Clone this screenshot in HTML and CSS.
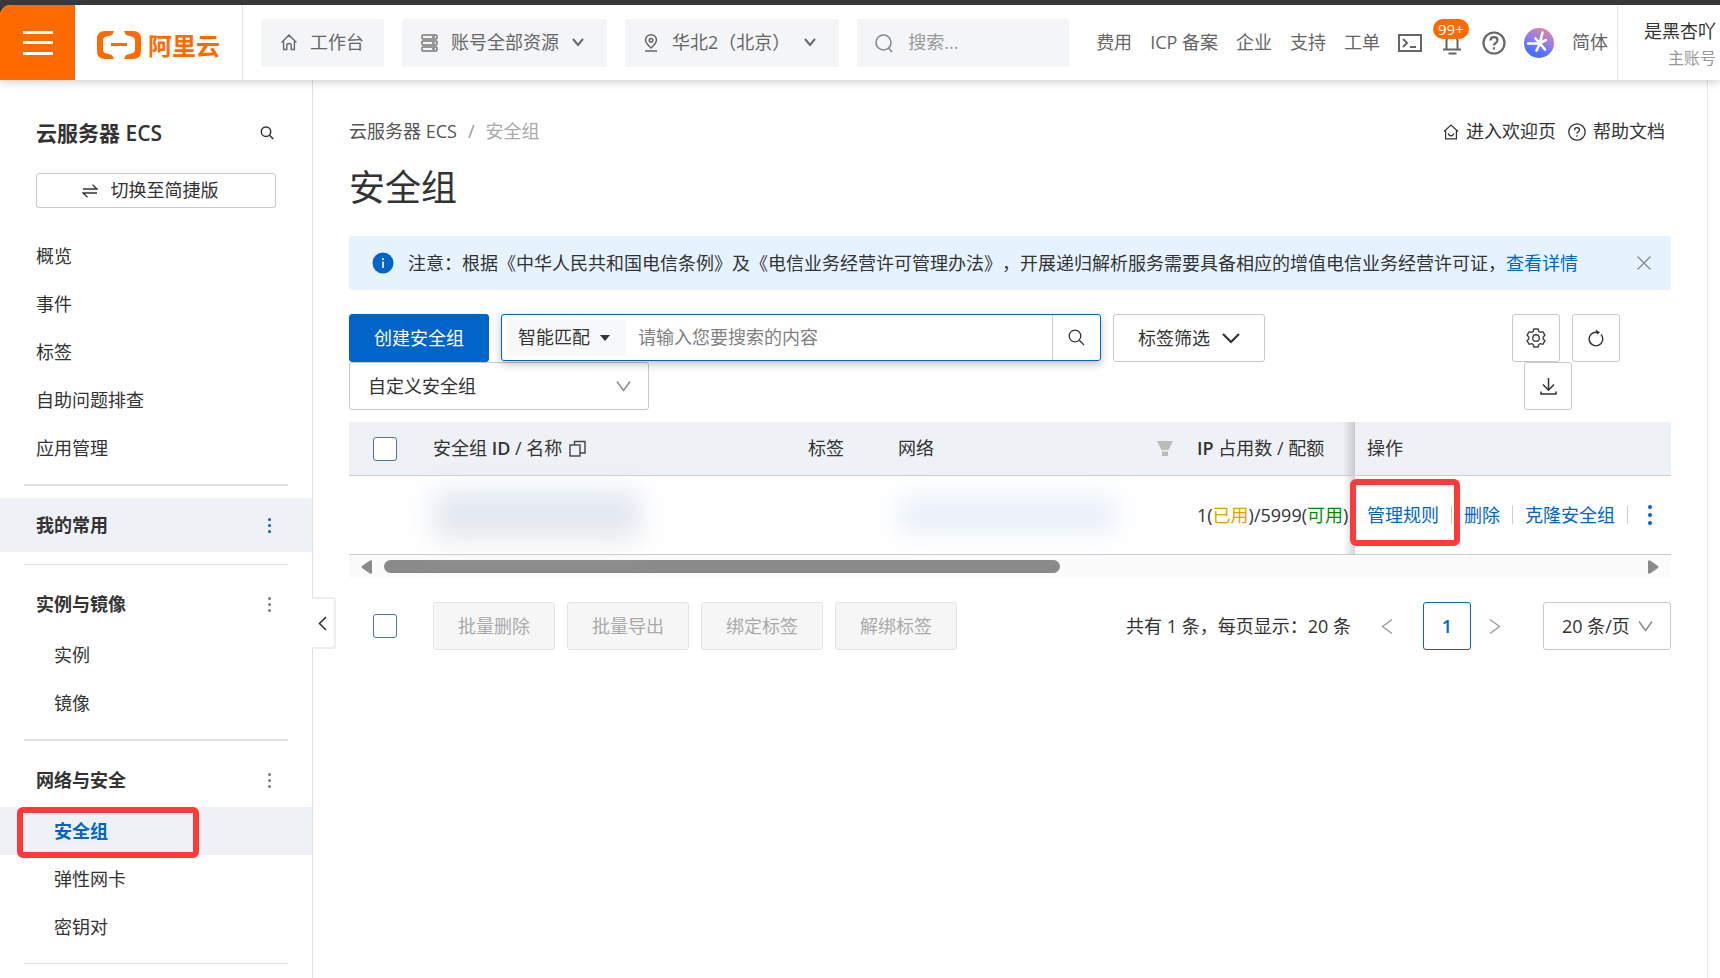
FILE: index.html
```html
<!DOCTYPE html>
<html lang="zh-CN">
<head>
	<meta charset="utf-8">
	<title>安全组 - 云服务器 ECS</title>
	<link rel="stylesheet" href="styles.css">
</head>
<body>
	<header class="topbar">
		<button class="menu-btn" aria-label="菜单">
			<svg width="30" height="26" viewBox="0 0 30 26" fill="#fff"><path d="M0 1h30v3H0zM0 11h30v3H0zM0 22h30v3H0z"/></svg>
		</button>
		<a class="logo" href="#">
			<svg width="44" height="28" viewBox="0 0 44 28" fill="#ff6a00"><path d="M17 0H8Q0 0 0 8v12q0 8 8 8h9l-2-4-7-2q-2-1-2-3V9q0-2 2-3l7-2zM27 0h9q8 0 8 8v12q0 8-8 8h-9l2-4 7-2q2-1 2-3V9q0-2-2-3l-7-2zM14 12h16v3H14z"/></svg>
			<span>阿里云</span>
		</a>
		<div class="topnav">
			<button class="top-btn">
				<svg width="16" height="17" viewBox="0 0 16 17" fill="none" stroke="#666" stroke-width="1.4"><path d="M.6 8.6 8 1l7.4 7.6M2.6 7.5v8h3.2v-4q0-2 2.2-2t2.2 2v4h3.2v-8"/></svg>
				<span>工作台</span>
			</button>
			<button class="top-btn picker">
				<svg width="17" height="18" viewBox="0 0 17 18" fill="none" stroke="#777" stroke-width="1.5"><rect x="1" y="1" width="15" height="4" rx="1"/><rect x="1" y="7" width="15" height="4" rx="1"/><rect x="1" y="13" width="15" height="4" rx="1"/><path d="M11 3h3M11 9h3M11 15h3"/></svg>
				<span>账号全部资源</span>
				<svg width="12" height="9" viewBox="0 0 12 9" fill="none" stroke="#666" stroke-width="2"><path d="m1 1 5 6 5-6"/></svg>
			</button>
			<button class="top-btn picker region">
				<svg width="14" height="18" viewBox="0 0 14 18" fill="none" stroke="#666" stroke-width="1.5"><path d="M7 14Q1.500 9 1.500 6a5.500 5.200 0 0 1 11 0Q12.500 9 7 14zM1 17h12"/><circle cx="7" cy="6.300" r="1.800"/></svg>
				<span>华北2（北京）</span>
				<svg width="12" height="9" viewBox="0 0 12 9" fill="none" stroke="#666" stroke-width="2"><path d="m1 1 5 6 5-6"/></svg>
			</button>
			<label class="top-search">
				<svg width="18" height="20" viewBox="0 0 18 20" fill="none" stroke="#888" stroke-width="1.600"><circle cx="8.500" cy="9.500" r="7.500"/><path d="m13.500 15 3.500 4"/></svg>
				<input type="text" placeholder="搜索..." aria-label="搜索">
			</label>
		</div>
		<nav class="toplinks">
			<a href="#">费用</a>
			<a href="#">ICP 备案</a>
			<a href="#">企业</a>
			<a href="#">支持</a>
			<a href="#">工单</a>
			<a href="#" aria-label="终端">
				<svg width="24" height="18" viewBox="0 0 24 18" fill="none" stroke="#666" stroke-width="2"><rect x="1" y="1" width="22" height="16"/><path d="m5 5 4 4-4 4M12 13h6"/></svg>
			</a>
			<a class="bell" href="#" aria-label="消息">
				<svg width="24" height="24" viewBox="0 0 24 24" fill="none" stroke="#666" stroke-width="2"><path d="M3 18.500h18M6.500 18.500V10a5.500 6 0 0 1 11 0v8.500M8.500 22.500h8"/></svg>
				<span class="badge">99+</span>
			</a>
			<a href="#" aria-label="帮助">
				<svg width="24" height="24" viewBox="0 0 24 24" fill="none" stroke="#666" stroke-width="2.200"><circle cx="12" cy="12" r="10.500"/><path d="M8.500 9.500q0-3.300 3.500-3.300t3.500 3q0 1.800-1.800 2.800T12 14.500M12 16.200v2.200"/></svg>
			</a>
			<a href="#" aria-label="AI 助理">
				<svg width="30" height="30" viewBox="0 0 30 30">
					<defs><linearGradient id="ai" x1="0.300" y1="1" x2="0.700" y2="0"><stop offset="0" stop-color="#2f6bff"/><stop offset="0.500" stop-color="#8a7cf0"/><stop offset="1" stop-color="#d98a9e"/></linearGradient></defs>
					<circle cx="15" cy="15" r="15" fill="url(#ai)"/>
					<path d="M18.500 4.500 16 15M4 15.500h12M16 15.500l-3.500 7M16 15.500l5 6M16 15l6-3M11.500 10.500l4.500 5" fill="none" stroke="#fff" stroke-width="2.600" stroke-linecap="round"/>
				</svg>
			</a>
			<a href="#">简体</a>
		</nav>
		<div class="user">
			<div>是黑杏吖</div>
			<div class="role">主账号</div>
		</div>
	</header>

	<div class="page">
		<aside class="sidebar">
			<div class="side-head">
				<h2>云服务器 <span>ECS</span></h2>
				<button class="plain" aria-label="搜索">
					<svg width="14" height="14" viewBox="0 0 14 14" fill="none" stroke="#333" stroke-width="1.500"><circle cx="6" cy="5.700" r="4.700"/><path d="m9.300 9 4 4"/></svg>
				</button>
			</div>
			<button class="switch-btn">
				<svg width="16" height="14" viewBox="0 0 16 14" fill="none" stroke="#333" stroke-width="1.300"><path d="M1 5h14L10.500.8M15 9H1l4.500 4.200"/></svg>
				<span>切换至简捷版</span>
			</button>
			<nav class="side-nav">
				<a href="#">概览</a>
				<a href="#">事件</a>
				<a href="#">标签</a>
				<a href="#">自助问题排查</a>
				<a href="#">应用管理</a>
				<hr class="thick">
				<div class="group active">我的常用<button class="plain dots" aria-label="更多"><i></i><i></i><i></i></button></div>
				<hr>
				<div class="group">实例与镜像<button class="plain dots" aria-label="更多"><i></i><i></i><i></i></button></div>
				<a class="sub" href="#">实例</a>
				<a class="sub" href="#">镜像</a>
				<hr class="thick">
				<div class="group">网络与安全<button class="plain dots" aria-label="更多"><i></i><i></i><i></i></button></div>
				<a class="sub selected" href="#">安全组<span class="mark"></span></a>
				<a class="sub" href="#">弹性网卡</a>
				<a class="sub" href="#">密钥对</a>
				<hr>
			</nav>
			<button class="collapse" aria-label="收起">
				<svg width="9" height="15" viewBox="0 0 9 15" fill="none" stroke="#333" stroke-width="1.600"><path d="M8 1 1.500 7.500 8 14"/></svg>
			</button>
		</aside>

		<main class="content">
			<div class="crumbs">
				<a href="#">云服务器 ECS</a>
				<span class="slash">/</span>
				<span class="current">安全组</span>
				<a class="help first" href="#">
					<svg width="16" height="16" viewBox="0 0 16 16" fill="none" stroke="#333" stroke-width="1.200"><path d="M1 7.500 8 1l7 6.500M2.600 6.500v8.300h10.800V6.500M5.300 9.300q.4 2.500 2.700 2.500t2.700-2.500"/></svg>
					进入欢迎页
				</a>
				<a class="help" href="#">
					<svg width="18" height="18" viewBox="0 0 18 18" fill="none" stroke="#333" stroke-width="1.300"><circle cx="9" cy="9" r="8.200"/><path d="M6.500 7.200q0-2.500 2.500-2.500t2.500 2.200q0 1.300-1.300 2T9 10.800M9 12.300v1.500"/></svg>
					帮助文档
				</a>
			</div>
			<h1>安全组</h1>

			<div class="notice">
				<svg width="22" height="22" viewBox="0 0 22 22"><circle cx="11" cy="11" r="10.500" fill="#0064c8"/><path d="M11 6v2M11 9.500V16" stroke="#fff" stroke-width="1.600"/></svg>
				<p>注意：根据《中华人民共和国电信条例》及《电信业务经营许可管理办法》，开展递归解析服务需要具备相应的增值电信业务经营许可证，<a href="#">查看详情</a></p>
				<button class="plain" aria-label="关闭">
					<svg width="14" height="14" viewBox="0 0 14 14" stroke="#888" stroke-width="1.300"><path d="m.5.5 13 13M13.500.5l-13 13"/></svg>
				</button>
			</div>

			<div class="toolbar">
				<div class="filters">
					<button class="btn primary">创建安全组</button>
					<div class="search">
						<button class="match">智能匹配 <svg width="10" height="6" viewBox="0 0 10 6" fill="#333"><path d="M0 0h10L5 6z"/></svg></button>
						<input type="text" placeholder="请输入您要搜索的内容" aria-label="搜索安全组">
						<button class="go" aria-label="搜索">
							<svg width="17" height="17" viewBox="0 0 17 17" fill="none" stroke="#333" stroke-width="1.300"><circle cx="7" cy="7" r="5.800"/><path d="m11.300 11.300 4.700 4.700"/></svg>
						</button>
					</div>
					<button class="btn tag-filter">标签筛选
						<svg width="18" height="11" viewBox="0 0 18 11" fill="none" stroke="#333" stroke-width="2.200"><path d="m1 1 8 8 8-8"/></svg>
					</button>
					<div class="select type">
						<select aria-label="安全组类型"><option>自定义安全组</option></select>
						<svg width="15" height="11" viewBox="0 0 15 11" fill="none" stroke="#888" stroke-width="1.400"><path d="m1 .5 6.500 9 6.500-9"/></svg>
					</div>
				</div>
				<div class="tools">
					<button class="btn" aria-label="设置">
						<svg width="20" height="20" viewBox="0 0 20 20" fill="none" stroke="#444" stroke-width="1.400" stroke-linejoin="round"><path d="M7.800 1h4.400l.6 2.500 1.500.9 2.500-.8L19 7.300 17.200 9v2l1.800 1.700-2.200 3.700-2.500-.8-1.500.9-.6 2.500H7.800l-.6-2.500-1.500-.9-2.500.8L1 12.700 2.800 11V9L1 7.300l2.200-3.700 2.500.8 1.500-.9z"/><circle cx="10" cy="10" r="3.300"/></svg>
					</button>
					<button class="btn" aria-label="刷新">
						<svg width="16" height="18" viewBox="0 0 16 18" fill="none" stroke="#333" stroke-width="1.400"><path d="M13 5.500a6.800 6.800 0 1 1-4-2.200"/><path d="M7.500.5 12 3.200 9 5.800z" fill="#333" stroke="none"/></svg>
					</button>
					<button class="btn" aria-label="下载">
						<svg width="17" height="17" viewBox="0 0 17 17" fill="none" stroke="#333" stroke-width="1.500"><path d="M8.500 0v12M3 6.500l5.500 5.700L14 6.500M1 13.500V16h15v-2.500"/></svg>
					</button>
				</div>
			</div>

			<table class="groups">
				<colgroup><col class="c-check"><col class="c-id"><col class="c-tag"><col><col class="c-ip"><col class="c-ops"></colgroup>
				<thead>
					<tr>
						<th class="check"><input type="checkbox" aria-label="全选"></th>
						<th>安全组 <b>ID</b> / 名称 <svg width="17" height="17" viewBox="0 0 17 17" fill="none" stroke="#444" stroke-width="1.400"><rect x="1" y="5" width="10" height="11"/><path d="M5.500 5V1.500H16V13h-5"/></svg></th>
						<th>标签</th>
						<th><div class="filter-head">网络 <svg width="16" height="15" viewBox="0 0 16 15" fill="#bbb"><path d="M0 0h16l-4.500 9h-7zM5 10.500h6V15H5z"/></svg></div></th>
						<th class="ip"><b>IP</b> 占用数 / 配额</th>
						<th>操作</th>
					</tr>
				</thead>
				<tbody>
					<tr>
						<td></td>
						<td><div class="smudge name"></div></td>
						<td></td>
						<td><div class="smudge net"></div></td>
						<td class="ip">1(<span class="used">已用</span>)/5999(<span class="free">可用</span>)</td>
						<td>
							<div class="ops">
								<a href="#">管理规则<span class="mark"></span></a>
								<a href="#">删除</a>
								<a href="#">克隆安全组</a>
								<button class="plain dots" aria-label="更多操作"><i></i><i></i><i></i></button>
							</div>
						</td>
					</tr>
				</tbody>
			</table>
			<div class="scroller">
				<svg width="11" height="14" viewBox="0 0 11 14" fill="#8a8a8a"><path d="M11 1v12q-1 1-2 .5L1 8q-1-1 0-2L9 .5q1-.5 2 .5z"/></svg>
				<div class="track"><div class="thumb"></div></div>
				<svg width="11" height="14" viewBox="0 0 11 14" fill="#8a8a8a"><path d="M0 1v12q1 1 2 .5L10 8q1-1 0-2L2 .5Q1 0 0 1z"/></svg>
			</div>

			<div class="footer">
				<input type="checkbox" aria-label="选择全部">
				<div class="batch">
					<button class="btn" disabled>批量删除</button>
					<button class="btn" disabled>批量导出</button>
					<button class="btn" disabled>绑定标签</button>
					<button class="btn" disabled>解绑标签</button>
				</div>
				<div class="pager">
					<span>共有 1 条，每页显示：20 条</span>
					<button class="plain prev" aria-label="上一页"><svg width="12" height="15" viewBox="0 0 12 15" fill="none" stroke="#999" stroke-width="1.300"><path d="m11 .5-9.500 7 9.500 7"/></svg></button>
					<button class="btn page-no">1</button>
					<button class="plain next" aria-label="下一页"><svg width="12" height="15" viewBox="0 0 12 15" fill="none" stroke="#999" stroke-width="1.300"><path d="m1 .5 9.500 7-9.500 7"/></svg></button>
					<div class="select size">
						<select aria-label="每页条数"><option>20 条/页</option></select>
						<svg width="15" height="11" viewBox="0 0 15 11" fill="none" stroke="#888" stroke-width="1.400"><path d="m1 .5 6.500 9 6.500-9"/></svg>
					</div>
				</div>
			</div>
		</main>
	</div>
</body>
</html>
```
FILE: styles.css
```css
* {
	box-sizing: border-box;
}

body {
	display: flex;
	flex-direction: column;
	min-height: 100vh;
	margin: 0;
	padding-top: 5px;
	background: linear-gradient(#3b3b3b 20px, #fff 20px);
	color: #333;
	font: 18px/27px "Open Sans", "Noto Sans CJK SC", sans-serif;
	text-spacing-trim: space-all;
	overflow: hidden;
}

button, input, select {
	font: inherit;
	color: inherit;
}

button {
	cursor: pointer;
}

a {
	color: inherit;
	text-decoration: none;
}

svg {
	display: block;
	flex: none;
}

b {
	font-weight: 600;
}

.plain {
	padding: 0;
	border: none;
	background: none;
}

/* top bar */
.topbar {
	display: flex;
	position: relative;
	z-index: 2;
	height: 75px;
	background: #fff;
	border-radius: 11px 0 0 0;
	box-shadow: 0 2px 8px rgba(0, 0, 0, 0.2);
	white-space: nowrap;
}

.menu-btn {
	display: flex;
	align-items: center;
	justify-content: center;
	width: 75px;
	border: none;
	border-radius: 11px 0 0 0;
	background: #ff6a00;
}

.logo {
	display: flex;
	align-items: center;
	gap: 7px;
	padding: 5px 22px 0 22px;
	border-right: 1px solid #e5e5e5;
	color: #ff6a00;
	font-size: 24px;
	font-weight: 700;
}

.topnav {
	display: flex;
	flex: 1;
	align-items: center;
	gap: 18px;
	padding: 0 27px 0 18px;
	color: #666;
}

.top-btn {
	display: flex;
	align-items: center;
	gap: 13px;
	height: 48px;
	padding: 0 20px;
	border: none;
	border-radius: 3px;
	background: #f4f5f7;
}

.picker {
	padding: 0 23px 0 19px;
}

.region {
	gap: 14px;
}

.top-search {
	display: flex;
	flex: 1;
	align-items: center;
	gap: 15px;
	min-width: 0;
	height: 48px;
	padding-left: 18px;
	background: #f4f5f7;
}

.top-search input {
	width: 100%;
	min-width: 0;
	padding: 0;
	border: none;
	background: none;
	outline: none;
}

.top-search input::placeholder {
	color: #999;
}

.toplinks {
	display: flex;
	align-items: center;
	gap: 18px;
	padding-right: 9px;
	border-right: 1px solid #e5e5e5;
	color: #666;
}

.bell {
	position: relative;
}

.badge {
	position: absolute;
	top: -12px;
	left: -7px;
	padding: 0 5px;
	border-radius: 10px;
	background: #ff6a00;
	color: #fff;
	font-size: 15px;
	line-height: 20px;
}

.user {
	width: 102px;
	padding: 13px 4px 0 0;
	text-align: right;
}

.role {
	color: #999;
	font-size: 16px;
}

/* sidebar */
.page {
	display: flex;
	flex: 1;
	background: #fff;
}

.sidebar {
	position: relative;
	flex: none;
	width: 313px;
	padding-top: 38px;
	border-right: 1px solid #e0e0e0;
}

.side-head {
	display: flex;
	align-items: center;
	justify-content: space-between;
	padding: 0 38px 0 36px;
}

.side-head h2 {
	margin: 0;
	font-size: 21px;
	font-weight: 700;
	line-height: 30px;
}

.side-head h2 span {
	font-weight: 600;
}

.switch-btn {
	display: flex;
	align-items: center;
	justify-content: center;
	gap: 13px;
	width: 240px;
	height: 35px;
	margin: 25px 36px 24px;
	padding: 0 12px 0 0;
	border: 1px solid #c8c8c8;
	border-radius: 3px;
	background: #fff;
}

.side-nav a,
.group {
	display: block;
	height: 48px;
	padding-left: 36px;
	line-height: 48px;
}

.side-nav .sub {
	padding-left: 54px;
}

.side-nav hr {
	height: 1px;
	margin: 12px 24px;
	border: none;
	background: #e0e0e0;
}

.side-nav .thick {
	height: 2px;
}

.group {
	display: flex;
	align-items: center;
	justify-content: space-between;
	height: 54px;
	padding-right: 41px;
	font-weight: 700;
}

.active {
	background: #eef1f6;
}

.side-nav .selected {
	position: relative;
	background: #eef1f6;
	color: #0064c8;
	font-weight: 700;
}

.dots {
	display: flex;
	flex-direction: column;
	gap: 3px;
}

.dots i {
	width: 3px;
	height: 3px;
	border-radius: 50%;
	background: #777;
}

.active .dots i {
	background: #0064c8;
}

/* red frames round the entries to click */
.mark {
	position: absolute;
	border: 6px solid #fc3a3a;
	border-radius: 6px;
}

.selected .mark {
	top: 0;
	left: 17px;
	z-index: 1;
	width: 182px;
	height: 51px;
}

.collapse {
	display: flex;
	position: absolute;
	top: 517px;
	left: 100%;
	align-items: center;
	width: 24px;
	height: 52px;
	padding: 0 6px;
	border: 2px solid #eee;
	border-left: none;
	border-radius: 0 4px 4px 0;
	background: #fff;
}

/* content */
.content {
	flex: 1;
	min-width: 0;
	margin-right: 12px;
	padding: 38px 36px 0;
	border-right: 1px solid #e8e8e8;
}

.crumbs {
	display: flex;
	color: #555;
}

.slash {
	padding: 0 11px;
	color: #999;
}

.current {
	color: #aaa;
}

.help {
	display: flex;
	align-items: center;
	gap: 7px;
	margin: 0 6px;
	color: #333;
}

.first {
	margin-left: auto;
}

h1 {
	margin: 16px 0 21px;
	font-size: 36px;
	font-weight: 400;
	line-height: 54px;
}

.notice {
	display: flex;
	align-items: center;
	gap: 14px;
	min-height: 54px;
	padding: 0 20px 0 23px;
	border-radius: 3px;
	background: #e6f3ff;
}

.notice p {
	flex: 1;
	margin: 0;
}

.notice a {
	color: #0064c8;
}

.toolbar {
	display: flex;
	margin: 24px 0 12px;
}

.filters {
	display: flex;
	flex: 1;
	flex-wrap: wrap;
	column-gap: 12px;
}

.tools {
	display: flex;
	flex-wrap: wrap;
	width: 159px;
}

.btn {
	display: flex;
	align-items: center;
	justify-content: center;
	min-width: 48px;
	height: 48px;
	padding: 0;
	border: 1px solid #c8c8c8;
	border-radius: 3px;
	background: #fff;
}

.tools .btn + .btn {
	margin-left: 12px;
}

.primary {
	width: 140px;
	border-color: #0064c8;
	background: #0064c8;
	color: #fff;
}

.search {
	display: flex;
	position: relative;
	align-items: center;
	width: 600px;
	height: 47px;
	padding-left: 5px;
	border: 1px solid #0064c8;
	border-radius: 3px;
	background: #fff;
	box-shadow: 0 3px 8px rgba(0, 0, 0, 0.25);
}

.match {
	display: flex;
	align-items: center;
	gap: 10px;
	height: 36px;
	padding: 0 16px 0 11px;
	border: none;
	background: #f7f8fa;
}

.search input {
	flex: 1;
	min-width: 0;
	padding: 0 12px;
	border: none;
	outline: none;
}

.search input::placeholder {
	color: #808080;
}

.go {
	display: flex;
	align-items: center;
	justify-content: center;
	align-self: stretch;
	width: 48px;
	padding: 0;
	border: none;
	border-left: 1px solid #ccc;
	background: none;
}

.tag-filter {
	gap: 12px;
	width: 152px;
}

.select {
	display: grid;
	align-items: center;
	height: 48px;
}

.select select,
.select svg {
	grid-area: 1 / 1;
}

.select select {
	appearance: none;
	width: 100%;
	height: 100%;
	padding: 0 18px;
	border: 1px solid #c8c8c8;
	border-radius: 3px;
	background: #fff;
}

.select svg {
	justify-self: end;
	margin-right: 18px;
	pointer-events: none;
}

.type {
	width: 300px;
}

.size {
	width: 128px;
}

input[type="checkbox"] {
	appearance: none;
	display: block;
	flex: none;
	width: 24px;
	height: 24px;
	margin: 0;
	border: 1px solid #4f76a3;
	border-radius: 3px;
	background: #fff;
}

/* table */
.groups {
	width: 100%;
	table-layout: fixed;
	border-collapse: separate;
	border-spacing: 0;
	white-space: nowrap;
}

.c-check {
	width: 72px;
}

.c-id {
	width: 375px;
}

.c-tag {
	width: 90px;
}

.c-ip {
	width: 170px;
}

.c-ops {
	width: 316px;
}

.groups th,
.groups td {
	padding: 0 12px;
	border-bottom: 1px solid #ccc;
	text-align: left;
}

.groups th {
	height: 54px;
	background: #eef1f6;
	font-weight: 400;
}

.groups td {
	height: 79px;
}

.groups .check {
	padding-left: 24px;
}

.groups th svg {
	display: inline-block;
	margin-left: 2px;
	vertical-align: -2px;
}

.filter-head {
	display: flex;
	align-items: center;
	justify-content: space-between;
}

.groups .ip {
	background-image: linear-gradient(to left, rgba(0, 0, 0, 0.16), rgba(0, 0, 0, 0));
	background-position: right;
	background-repeat: no-repeat;
	background-size: 12px 100%;
}

.used {
	color: #e0a000;
}

.free {
	color: #008a00;
}

.smudge {
	filter: blur(14px);
}

.name {
	width: 208px;
	height: 50px;
	background: linear-gradient(#e0e9f5, #e5e6e8);
}

.net {
	width: 218px;
	height: 34px;
	background: #e6eef8;
}

.ops {
	display: flex;
	align-items: center;
	color: #0064c8;
}

.ops a {
	position: relative;
}

.ops a::after {
	content: "";
	display: inline-block;
	width: 1px;
	height: 18px;
	margin: 0 12px;
	background: #ccc;
	vertical-align: -2px;
}

.ops .mark {
	top: -23px;
	left: -17px;
	width: 110px;
	height: 67px;
}

.ops .dots {
	gap: 4px;
	margin-left: 8px;
}

.ops .dots i {
	width: 4px;
	height: 4px;
	background: #0064c8;
}

.scroller {
	display: flex;
	align-items: center;
	gap: 12px;
	height: 23px;
	padding: 0 12px;
	background: #fbfbfb;
}

.track {
	flex: 1;
}

.thumb {
	width: 54%;
	height: 13px;
	border-radius: 7px;
	background: #8a8a8a;
}

/* footer */
.footer {
	display: flex;
	align-items: center;
	margin-top: 24px;
	padding-left: 24px;
}

.batch {
	display: flex;
	gap: 12px;
	margin-left: 36px;
}

.batch .btn {
	width: 122px;
	border-color: #e3e3e3;
	background: #f6f6f6;
	color: #aaa;
}

.pager {
	display: flex;
	align-items: center;
	margin-left: auto;
}

.prev {
	margin: 0 30px;
}

.next {
	margin: 0 42px 0 18px;
}

.page-no {
	border-color: #0064c8;
	color: #0064c8;
	font-weight: 600;
}
```
